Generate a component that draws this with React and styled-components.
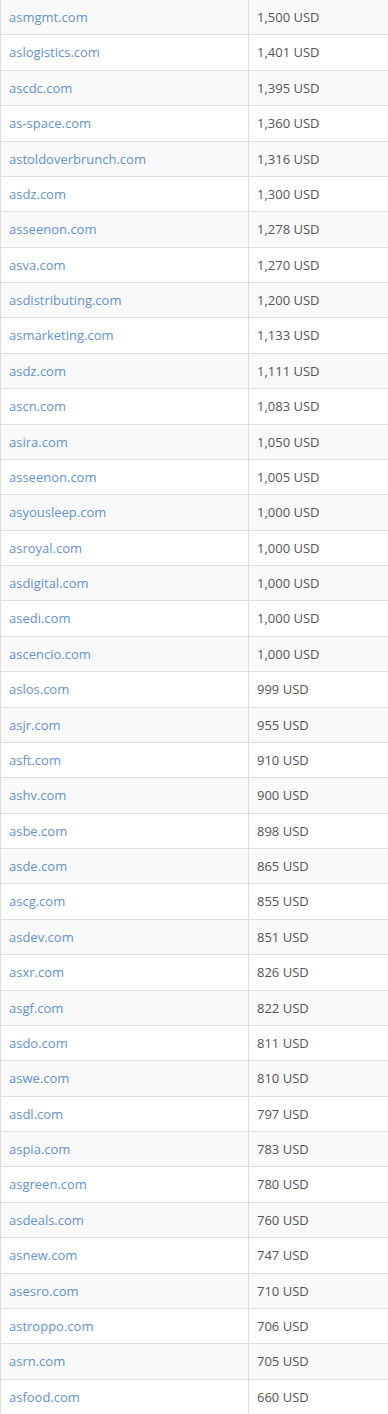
import React from "react";
import styled, { createGlobalStyle } from "styled-components";

const GlobalStyle = createGlobalStyle`
  html, body {
    margin: 0;
    padding: 0;
    background: #fff;
  }
  body {
    font-family: "Open Sans", "Liberation Sans", Arial, sans-serif;
  }
`;

const rows = [
  ["asmgmt.com", "1,500"],
  ["aslogistics.com", "1,401"],
  ["ascdc.com", "1,395"],
  ["as-space.com", "1,360"],
  ["astoldoverbrunch.com", "1,316"],
  ["asdz.com", "1,300"],
  ["asseenon.com", "1,278"],
  ["asva.com", "1,270"],
  ["asdistributing.com", "1,200"],
  ["asmarketing.com", "1,133"],
  ["asdz.com", "1,111"],
  ["ascn.com", "1,083"],
  ["asira.com", "1,050"],
  ["asseenon.com", "1,005"],
  ["asyousleep.com", "1,000"],
  ["asroyal.com", "1,000"],
  ["asdigital.com", "1,000"],
  ["asedi.com", "1,000"],
  ["ascencio.com", "1,000"],
  ["aslos.com", "999"],
  ["asjr.com", "955"],
  ["asft.com", "910"],
  ["ashv.com", "900"],
  ["asbe.com", "898"],
  ["asde.com", "865"],
  ["ascg.com", "855"],
  ["asdev.com", "851"],
  ["asxr.com", "826"],
  ["asgf.com", "822"],
  ["asdo.com", "811"],
  ["aswe.com", "810"],
  ["asdl.com", "797"],
  ["aspia.com", "783"],
  ["asgreen.com", "780"],
  ["asdeals.com", "760"],
  ["asnew.com", "747"],
  ["asesro.com", "710"],
  ["astroppo.com", "706"],
  ["asrn.com", "705"],
  ["asfood.com", "660"],
];

const Table = styled.div`
  display: flex;
  flex-direction: column;
  width: 100%;
  border-left: 1px solid #dddddd;
  box-sizing: border-box;
`;

const Row = styled.div`
  display: grid;
  grid-template-columns: 247px 1fr;
  background: ${p => (p.$odd ? "#f9f9f9" : "#ffffff")};
  border-bottom: 1px solid #dddddd;
`;

const Cell = styled.div`
  padding: 8px 8px;
  font-size: 13px;
  line-height: 18.37px;
  color: #555555;
  white-space: nowrap;
  & + & {
    border-left: 1px solid #dddddd;
  }
`;

const DomainLink = styled.a`
  color: #6393cb;
  text-decoration: none;
`;

export default function App() {
  return (
    <>
      <GlobalStyle />
      <Table>
        {rows.map(([domain, price], i) => (
          <Row key={i} $odd={i % 2 === 0}>
            <Cell>
              <DomainLink href="#">{domain}</DomainLink>
            </Cell>
            <Cell>{price} USD</Cell>
          </Row>
        ))}
      </Table>
    </>
  );
}
